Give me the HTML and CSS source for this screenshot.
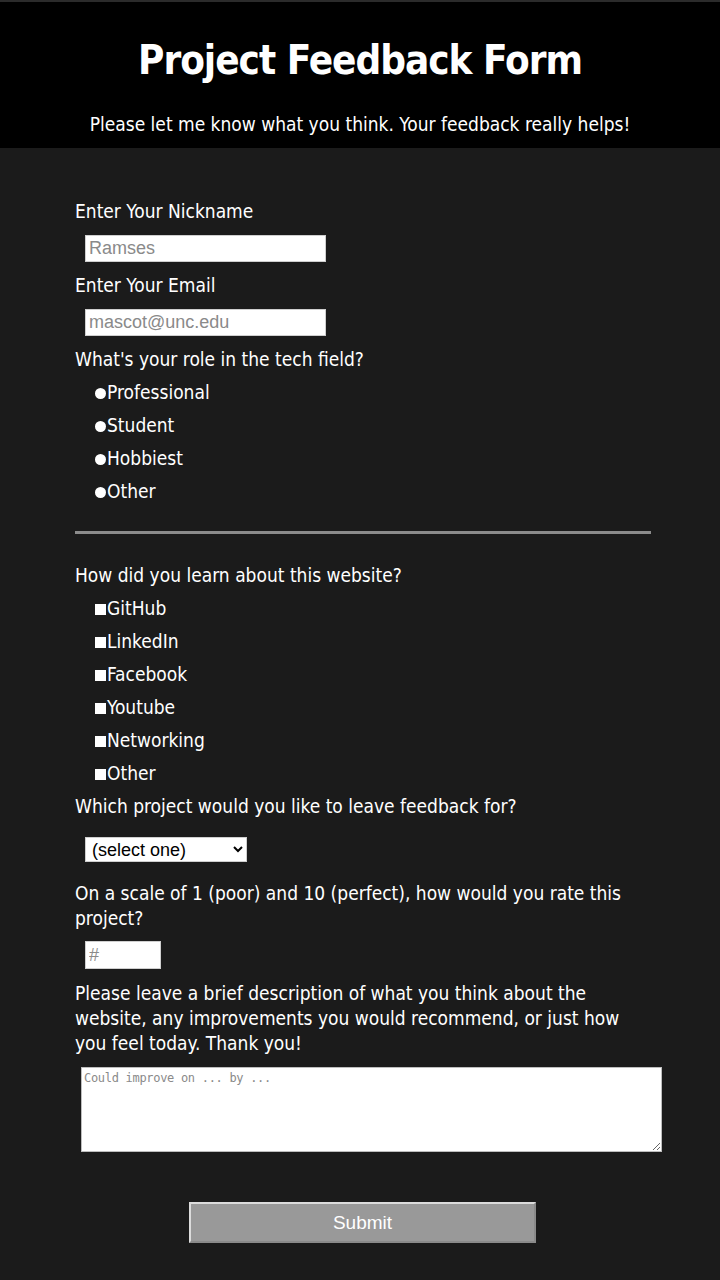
FILE: index.html
```html
<!DOCTYPE html>
<html lang="en">
<head>
<meta charset="utf-8">
<title>Project Feedback Form</title>
<link rel="stylesheet" href="styles.css">
</head>
<body>
<header class="top">
  <h1 class="title">Project Feedback Form</h1>
  <p class="subtitle">Please let me know what you think. Your feedback really helps!</p>
</header>
<main class="page">
  <form class="form">
    <label class="label" for="nick">Enter Your Nickname</label>
    <input class="field text" id="nick" type="text" placeholder="Ramses">
    <label class="label" for="email">Enter Your Email</label>
    <input class="field text" id="email" type="email" placeholder="mascot@unc.edu">

    <p class="label">What's your role in the tech field?</p>
    <div class="options">
      <label class="opt"><input class="radio" type="radio" name="role">Professional</label>
      <label class="opt"><input class="radio" type="radio" name="role">Student</label>
      <label class="opt"><input class="radio" type="radio" name="role">Hobbiest</label>
      <label class="opt"><input class="radio" type="radio" name="role">Other</label>
    </div>

    <hr class="rule">

    <p class="label">How did you learn about this website?</p>
    <div class="options">
      <label class="opt"><input class="check" type="checkbox">GitHub</label>
      <label class="opt"><input class="check" type="checkbox">LinkedIn</label>
      <label class="opt"><input class="check" type="checkbox">Facebook</label>
      <label class="opt"><input class="check" type="checkbox">Youtube</label>
      <label class="opt"><input class="check" type="checkbox">Networking</label>
      <label class="opt"><input class="check" type="checkbox">Other</label>
    </div>

    <label class="label" for="proj">Which project would you like to leave feedback for?</label>
    <select class="field select" id="proj">
      <option>(select one)</option>
    </select>

    <label class="label" for="rate">On a scale of 1 (poor) and 10 (perfect), how would you rate this project?</label>
    <input class="field number" id="rate" type="text" placeholder="#">

    <label class="label" for="desc">Please leave a brief description of what you think about the website, any improvements you would recommend, or just how you feel today. Thank you!</label>
    <textarea class="area" id="desc" placeholder="Could improve on ... by ..."></textarea>

    <div class="actions">
      <button class="submit" type="button">Submit</button>
    </div>
  </form>
</main>
</body>
</html>
```

FILE: styles.css
```css
html, body {
  margin: 0;
  padding: 0;
  background: #1b1b1b;
}
body {
  font-family: "DejaVu Sans Condensed", "DejaVu Sans", sans-serif;
  color: #ffffff;
  min-height: 1280px;
}
.top {
  background: #000000;
  border-top: 2px solid #2b2b2b;
  padding: 33px 0 11px;
  text-align: center;
}
.title {
  margin: 0;
  font-size: 40px;
  line-height: 50px;
  letter-spacing: -1px;
  font-weight: bold;
}
.subtitle {
  margin: 27px 0 0;
  font-size: 19px;
  line-height: 25px;
}
.page {
  padding: 51px 0 40px 75px;
}
.form {
  width: 576px;
  display: flex;
  flex-direction: column;
  align-items: flex-start;
}
.label {
  display: block;
  margin: 0;
  font-size: 19px;
  line-height: 25px;
}
.field {
  margin: 11px 0 11px 10px;
  box-sizing: border-box;
  font-family: "Liberation Sans", Arial, sans-serif;
  font-size: 18px;
  border: 1px solid #cfcfcf;
  background: #ffffff;
  color: #000;
}
.field::placeholder {
  color: #8a8a8a;
}
.text {
  width: 241px;
  height: 27px;
  padding: 0 3px;
}
.number {
  width: 76px;
  height: 28px;
  padding: 0 3px;
  margin-top: 10px;
  margin-bottom: 12px;
}
.select {
  width: 162px;
  height: 25px;
  margin-top: 18px;
  margin-bottom: 19px;
  padding: 0 2px;
  border-radius: 0;
}
.options {
  display: flex;
  flex-direction: column;
  gap: 8px;
  margin: 8px 0;
  padding-left: 20px;
}
.opt {
  display: flex;
  align-items: center;
  font-size: 19px;
  line-height: 25px;
}
.radio, .check {
  appearance: none;
  -webkit-appearance: none;
  width: 11px;
  height: 11px;
  margin: 1px 1px 0 0;
  background: #ffffff;
  border: none;
}
.radio {
  border-radius: 50%;
}
.rule {
  align-self: stretch;
  margin: 19px 0 29px;
  border: none;
  height: 3px;
  background: #8c8c8c;
}
.area {
  box-sizing: border-box;
  width: 581px;
  height: 85px;
  margin: 11px 0 0 6px;
  border: 1px solid #bdbdbd;
  background: #fff;
  font-family: "DejaVu Sans Mono", monospace;
  font-size: 12px;
  letter-spacing: -0.3px;
  padding: 3px 2px;
  resize: both;
}
.area::placeholder {
  color: #8a8a8a;
}
.actions {
  align-self: stretch;
  display: flex;
  margin-top: 50px;
}
.submit {
  margin-left: 114px;
  width: 347px;
  height: 41px;
  background: #999999;
  color: #ffffff;
  border: 2px solid #dcdcdc;
  border-right-color: #8a8a8a;
  border-bottom-color: #8a8a8a;
  font-family: "Liberation Sans", Arial, sans-serif;
  font-size: 19px;
}
```
